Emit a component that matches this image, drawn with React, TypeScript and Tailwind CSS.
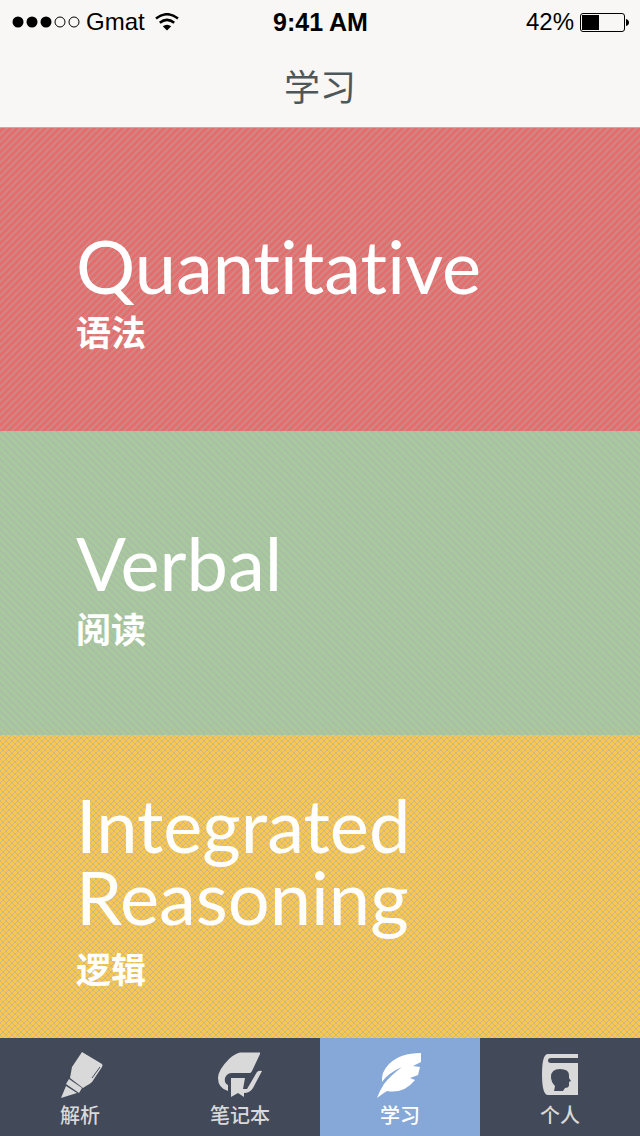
import type { ReactNode } from "react";

const stripes = {
  up: "bg-[linear-gradient(135deg,transparent_42%,#b9a0a070_42%,#b9a0a070_58%,transparent_58%),linear-gradient(135deg,#b9a0a070_8%,transparent_8%,transparent_92%,#b9a0a070_92%)] bg-size-[7px_7px]",
  down: "bg-[linear-gradient(45deg,transparent_42%,#a9b8b090_42%,#a9b8b090_58%,transparent_58%),linear-gradient(45deg,#a9b8b090_8%,transparent_8%,transparent_92%,#a9b8b090_92%)] bg-size-[7px_7px]",
  cross:
    "bg-[linear-gradient(45deg,transparent_42%,#b9b0a0b0_42%,#b9b0a0b0_58%,transparent_58%),linear-gradient(135deg,transparent_42%,#b9b0a0b0_42%,#b9b0a0b0_58%,transparent_58%)] bg-size-[6px_6px]",
};

function Subject(props: { title: ReactNode; label: string; look: string; space: string }) {
  return (
    <a href="#subject" className={`block px-[76px] text-white ${props.look}`}>
      <h2 className={`text-[74px] leading-[72px] font-normal [font-variant-ligatures:none] ${props.space}`}>
        {props.title}
      </h2>
      <p className="text-[35px] leading-[44px] font-bold">{props.label}</p>
    </a>
  );
}

function MarkerIcon() {
  return (
    <svg viewBox="0 0 60 60" className="h-[60px] w-[60px]" fill="currentColor" aria-hidden="true">
      <path d="M32 12L52 24Q53 25 52 27L42 42Q40 44 36 46L33 48L20 38L22 27Z" />
      <path d="M19 39L32 48L29 53L16 44Z" />
      <path d="M16 46L27 53L11 58Z" />
      <path d="M50 27L42 38" stroke="#424959" strokeWidth="1" />
    </svg>
  );
}

function NotebookIcon() {
  return (
    <svg viewBox="0 0 60 60" className="h-[60px] w-[60px]" fill="currentColor" aria-hidden="true">
      <path d="M50 12.500L30 12.500Q24 14 19 19Q8 30 8 38Q8 48 18 51L18 45Q14 43 15 38Q17 33 22 33L40 33Q41 33 42 31L50 14Z" />
      <path d="M21 38L35 38L33 49L37 49L47 32Q49 30 52 31L43 48Q40 53 34 53V57L28 53L21 57Z" />
    </svg>
  );
}

function FeatherIcon() {
  return (
    <svg viewBox="0 0 60 60" className="h-[60px] w-[60px]" fill="currentColor" aria-hidden="true">
      <path d="M51 13Q30 13 19 24Q11 32 12 42Q18 33 32 27Q20 36 14 44Q10 50 7 58Q12 54 17 51Q34 54 45 40L40 38L48 35L50 27L43 26L51 22Z" />
    </svg>
  );
}

function PersonBookIcon() {
  return (
    <svg viewBox="0 0 60 60" className="h-[60px] w-[60px]" fill="currentColor" fillRule="evenodd" aria-hidden="true">
      <path d="M48 14H18Q12 14 12 34Q12 55 18 55H48V23H21Q18 23 18 20.500Q18 18 21 18H48ZM24 51L25 46Q21 42 21 37Q21 29 30 29Q39 29 39 35L39 38L41 41L39 42V46Q38 48 35 48L33 51Z" />
    </svg>
  );
}

function Tab(props: { label: string; icon: ReactNode; active?: boolean }) {
  return (
    <button
      type="button"
      aria-current={props.active ? "page" : undefined}
      className={`flex flex-1 flex-col items-center pt-0.5 text-[20px] leading-[30px] font-medium ${
        props.active ? "bg-[#85a8d8] text-white" : "text-[#d9d9d9]"
      }`}
    >
      {props.icon}
      <span>{props.label}</span>
    </button>
  );
}

export default function App() {
  return (
    <div className="flex min-h-screen flex-col font-[Lato,'Noto_Sans_CJK_SC',sans-serif]">
      <header className="border-b border-[#b2b2b2] bg-[#f8f7f5]">
        <div className="grid h-11 grid-cols-3 items-center pr-[11px] pl-3 font-['Liberation_Sans',sans-serif] text-[24px] leading-7 text-black">
          <div className="flex items-center">
            <svg viewBox="0 0 70 12" className="h-3 w-[70px]" aria-hidden="true">
              {[6, 20, 34].map((x) => (
                <circle key={x} cx={x} cy="6" r="5.500" />
              ))}
              {[48, 62].map((x) => (
                <circle key={x} cx={x} cy="6" r="5" fill="none" stroke="#000" />
              ))}
            </svg>
            <span className="pl-1">Gmat</span>
            <svg viewBox="0 0 24 18" className="ml-2.5 h-[18px] w-6" fill="none" stroke="#000" strokeWidth="2.600" aria-hidden="true">
              <path d="M1 5.500Q12 -3 23 5.500M4.800 9.800Q12 4 19.200 9.800" />
              <path d="M7.800 13.300Q12 10 16.200 13.300L12 17.500Z" fill="#000" stroke="none" />
            </svg>
          </div>
          <span className="text-center text-[25px] font-bold">9:41 AM</span>
          <div className="flex items-center justify-end gap-1.5">
            <span>42%</span>
            <svg viewBox="0 0 49 19" className="h-[19px] w-[49px]" aria-hidden="true">
              <rect x=".5" y=".5" width="44" height="18" rx="2.500" fill="none" stroke="#000" />
              <path d="M2 2H19V17H2ZM46 6Q49 7 49 9.500Q49 12 46 13Z" />
            </svg>
          </div>
        </div>
        <h1 className="pt-4 pb-3 text-center text-[36px] leading-[55px] text-[#4d5659]">学习</h1>
      </header>
      <main className="grid flex-1 auto-rows-fr">
        <Subject title="Quantitative" label="语法" look={`bg-[#e46e6c] pt-[102px] ${stripes.up}`} space="pb-2" />
        <Subject title="Verbal" label="阅读" look={`bg-[#a8c99b] pt-24 ${stripes.down}`} space="pb-2" />
        <Subject
          title={<>Integrated<br />Reasoning</>}
          label="逻辑"
          look={`bg-[#f9c74f] pt-[54px] ${stripes.cross}`}
          space="pb-3.5"
        />
      </main>
      <nav className="flex h-[98px] bg-[#424959]">
        <Tab label="解析" icon={<MarkerIcon />} />
        <Tab label="笔记本" icon={<NotebookIcon />} />
        <Tab label="学习" icon={<FeatherIcon />} active />
        <Tab label="个人" icon={<PersonBookIcon />} />
      </nav>
    </div>
  );
}
